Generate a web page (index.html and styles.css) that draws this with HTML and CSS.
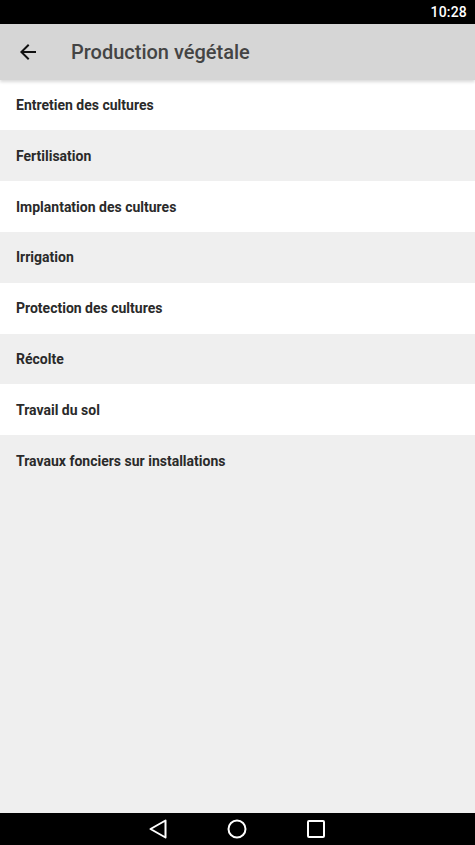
FILE: index.html
```html
<!DOCTYPE html>
<html lang="fr">
<head>
<meta charset="utf-8">
<link rel="stylesheet" href="styles.css">
</head>
<body>
<div class="screen">
  <div class="status"><span class="time">10:28</span></div>
  <header class="appbar">
    <svg class="back" width="24" height="24" viewBox="0 0 24 24"><path d="M20 11H7.83l5.59-5.59L12 4l-8 8 8 8 1.41-1.41L7.83 13H20v-2z" fill="#111"/></svg>
    <h1 class="title">Production végétale</h1>
  </header>
  <ul class="list">
    <li class="item">Entretien des cultures</li>
    <li class="item alt">Fertilisation</li>
    <li class="item">Implantation des cultures</li>
    <li class="item alt">Irrigation</li>
    <li class="item">Protection des cultures</li>
    <li class="item alt">Récolte</li>
    <li class="item">Travail du sol</li>
    <li class="item alt">Travaux fonciers sur installations</li>
  </ul>
  <nav class="navbar">
    <svg width="20" height="20" viewBox="0 0 20 20"><path d="M17.5 1.5 L2.5 10 L17.5 18.5 Z" fill="none" stroke="#fff" stroke-width="2" stroke-linejoin="round"/></svg>
    <svg width="20" height="20" viewBox="0 0 20 20"><circle cx="10" cy="10" r="8.5" fill="none" stroke="#fff" stroke-width="2"/></svg>
    <svg width="20" height="20" viewBox="0 0 20 20"><rect x="2" y="2" width="16" height="16" rx="1" fill="none" stroke="#fff" stroke-width="2"/></svg>
  </nav>
</div>
</body>
</html>
```
FILE: styles.css
```css
* { box-sizing: border-box; }
html, body { margin: 0; padding: 0; }
body { font-family: Roboto, "Noto Sans", sans-serif; background: #efefef; }
.screen { width: 475px; height: 845px; display: flex; flex-direction: column; background: #efefef; }
.status { height: 24px; background: #000; display: flex; justify-content: flex-end; align-items: center; padding-right: 8px; flex-shrink: 0; }
.time { color: #fff; font-size: 14px; font-weight: 500; letter-spacing: 0.2px; }
.appbar { height: 55.6px; background: #d6d6d6; display: flex; align-items: center; flex-shrink: 0; box-shadow: 0 2px 3px rgba(0,0,0,0.15); position: relative; z-index: 1; }
.back { margin-left: 16px; }
.title { margin: 0 0 0 31px; font-size: 20px; font-weight: 500; color: #444; }
.list { list-style: none; margin: 0; padding: 0; flex: 1; }
.item { height: 50.8px; display: flex; align-items: center; padding-left: 16px; font-size: 14px; font-weight: 700; color: #2a2a2a; background: #fff; }
.item.alt { background: #efefef; }
.navbar { height: 32px; background: #000; display: flex; justify-content: center; align-items: center; gap: 59px; flex-shrink: 0; padding-right: 2px; }
```
